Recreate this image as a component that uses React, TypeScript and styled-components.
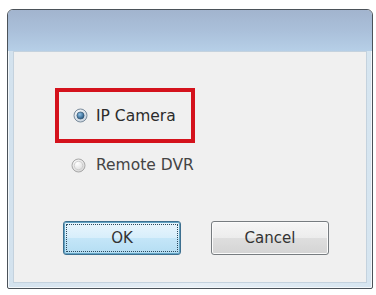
import styled, { createGlobalStyle } from 'styled-components';

const Global = createGlobalStyle`
    html, body {
        margin: 0;
        padding: 0;
        background: #ffffff;
    }
    body {
        font-family: "DejaVu Sans", Tahoma, sans-serif;
    }
`;

const Page = styled.div`
    width: 376px;
    height: 295px;
    padding: 9px 0 0 7px;
    box-sizing: border-box;
`;

const Window = styled.div`
    width: 366px;
    height: 280px;
    box-sizing: border-box;
    border: 1px solid #4b5259;
    border-radius: 6px 6px 2px 2px;
    background: linear-gradient(90deg, #d3e2ee 0%, #e6eef5 50%, #d6e5f0 100%);
    display: flex;
    flex-direction: column;
    padding: 0 5px 5px;
    box-shadow: inset 0 0 0 1px #f4f8fb;
`;

const TitleBar = styled.div`
    height: 41px;
    margin: 0 -5px;
    border-radius: 5px 5px 0 0;
    background: linear-gradient(180deg, #a2b4ce 0%, #abc1db 55%, #b6cfe7 100%);
    flex-shrink: 0;
`;

const Client = styled.div`
    flex: 1;
    background: #f0f0f0;
    border: 1px solid #c4d2de;
    display: flex;
    flex-direction: column;
    color: #333;
    font-size: 15.5px;
`;

const Highlight = styled.div`
    margin: 36px 0 0 41px;
    width: 140px;
    height: 55px;
    box-sizing: border-box;
    border: 4px solid #d4121c;
    display: flex;
    align-items: center;
    padding-left: 14px;
`;

const Option = styled.label<{ $muted?: boolean }>`
    display: flex;
    align-items: center;
    gap: 8px;
    color: ${p => (p.$muted ? '#444' : '#2b2b2b')};
`;

const PlainOption = styled(Option)`
    margin: 10px 0 0 57px;
    height: 24px;
    gap: 10px;
`;

const Buttons = styled.div`
    display: flex;
    gap: 30px;
    margin: 44px 0 0 49px;
`;

const Button = styled.div<{ $default?: boolean }>`
    width: 118px;
    height: 34px;
    box-sizing: border-box;
    border-radius: 3px;
    display: flex;
    align-items: center;
    justify-content: center;
    font-size: 15px;
    color: #333;
    border: 1px solid ${p => (p.$default ? '#3d6f8f' : '#777c80')};
    background: ${p =>
        p.$default
            ? 'linear-gradient(180deg, #eaf6fd 0%, #d7eefb 50%, #c4e6f8 51%, #b4ddf3 100%)'
            : 'linear-gradient(180deg, #f6f6f6 0%, #ececec 50%, #dedede 51%, #d4d4d4 100%)'};
    box-shadow: inset 0 0 0 1px ${p => (p.$default ? '#63a4c4' : '#fbfbfb')};
    position: relative;
`;

const Focus = styled.span`
    position: absolute;
    inset: 2px;
    border: 1px dotted #2b4a5e;
    border-radius: 1px;
`;

function Radio({ checked }: { checked?: boolean }) {
    return (
        <svg width="15" height="15" viewBox="0 0 15 15">
            <defs>
                <radialGradient id={checked ? 'rc' : 'ru'} cx="0.4" cy="0.35" r="0.7">
                    <stop offset="0" stopColor="#ffffff" />
                    <stop offset="1" stopColor={checked ? '#c4d0dc' : '#d4d4d4'} />
                </radialGradient>
                <radialGradient id="dot" cx="0.4" cy="0.35" r="0.7">
                    <stop offset="0" stopColor="#8fc1e6" />
                    <stop offset="1" stopColor="#1d4f7a" />
                </radialGradient>
            </defs>
            <circle cx="7.5" cy="7.5" r="6.5" fill={`url(#${checked ? 'rc' : 'ru'})`} stroke={checked ? '#7b8c9c' : '#a8a8a8'} strokeWidth="1" />
            {checked && <circle cx="7.5" cy="7.5" r="3.6" fill="url(#dot)" stroke="#2f4d66" strokeWidth="0.6" />}
            {!checked && <circle cx="7.5" cy="7.5" r="4.2" fill="none" stroke="#c8c8c8" strokeWidth="0.8" />}
        </svg>
    );
}

export default function App() {
    return (
        <Page>
            <Global />
            <Window>
                <TitleBar />
                <Client>
                    <Highlight>
                        <Option>
                            <Radio checked />
                            IP Camera
                        </Option>
                    </Highlight>
                    <PlainOption $muted>
                        <Radio />
                        Remote DVR
                    </PlainOption>
                    <Buttons>
                        <Button $default>
                            <Focus />
                            OK
                        </Button>
                        <Button>Cancel</Button>
                    </Buttons>
                </Client>
            </Window>
        </Page>
    );
}
